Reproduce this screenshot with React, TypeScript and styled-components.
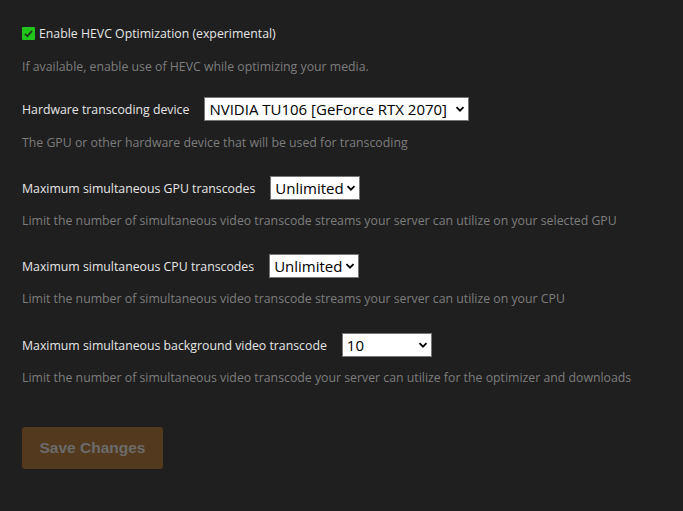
import React from "react";
import styled, { createGlobalStyle } from "styled-components";

const Global = createGlobalStyle`
  html, body { margin: 0; padding: 0; background: #1f1f1f; }
  body { font-family: "Open Sans", "Noto Sans", sans-serif; }
`;

const Page = styled.div`
  min-height: 511px;
  box-sizing: border-box;
  padding: 25px 22px 0 22px;
  background: #1f1f1f;
`;

const CheckRow = styled.label`
  display: flex;
  align-items: center;
  gap: 4px;
  height: 16px;
  color: #e6e6e6;
  font-size: 12.3px;
`;

const CheckBox = styled.span`
  width: 13px;
  height: 13px;
  border-radius: 1px;
  background: #20c41a;
  display: flex;
  align-items: center;
  justify-content: center;
`;

const Hint = styled.div<{ $top?: number }>`
  margin-top: ${(p) => p.$top ?? 12}px;
  color: #7d7d7d;
  font-size: 12.3px;
  line-height: 18px;
  white-space: nowrap;
`;

const Group = styled.div<{ $top?: number }>`
  margin-top: ${(p) => p.$top ?? 24}px;
`;

const Row = styled.div`
  display: flex;
  align-items: center;
  gap: 15px;
  height: 24px;
`;

const Label = styled.span`
  color: #e6e6e6;
  font-size: 12.3px;
  white-space: nowrap;
`;

const SelectBox = styled.div<{ $w: number }>`
  width: ${(p) => p.$w}px;
  height: 24px;
  box-sizing: border-box;
  background: #fff;
  border: 1px solid #767676;
  display: flex;
  align-items: center;
  padding-right: 3px;
`;

const NativeSelect = styled.select`
  appearance: none;
  -webkit-appearance: none;
  border: none;
  background: transparent;
  outline: none;
  flex: 1;
  min-width: 0;
  height: 100%;
  padding: 0 0 0 4px;
  font-family: "Open Sans", "Noto Sans", sans-serif;
  font-size: 15px;
  color: #000;
`;

const Button = styled.button`
  margin-top: 40px;
  width: 141px;
  height: 42px;
  border: none;
  border-radius: 3px;
  background: #533a1e;
  color: #6b6b6b;
  font-family: "Liberation Sans", Arial, sans-serif;
  font-weight: bold;
  font-size: 15.5px;
  padding: 0;
`;

const Chevron = () => (
  <svg width="10" height="10" viewBox="0 0 10 10">
    <path d="M1.5 3.2 L5 6.7 L8.5 3.2" fill="none" stroke="#000" strokeWidth="1.8" />
  </svg>
);

const Select = ({ w, value, options }: { w: number; value: string; options: string[] }) => (
  <SelectBox $w={w}>
    <NativeSelect defaultValue={value}>
      {options.map((o) => (
        <option key={o}>{o}</option>
      ))}
    </NativeSelect>
    <Chevron />
  </SelectBox>
);

const limits = ["Unlimited", "1", "2", "3", "4", "5", "10"];

export default function App() {
  return (
    <Page>
      <Global />
      <CheckRow>
        <CheckBox>
          <svg width="11" height="11" viewBox="0 0 11 11">
            <path d="M2 5.8 L4.4 8.2 L9 2.8" fill="none" stroke="#1d3a1a" strokeWidth="1.8" />
          </svg>
        </CheckBox>
        Enable HEVC Optimization (experimental)
      </CheckRow>
      <Hint $top={17}>If available, enable use of HEVC while optimizing your media.</Hint>

      <Group $top={21}>
        <Row>
          <Label>Hardware transcoding device</Label>
          <Select w={265} value="NVIDIA TU106 [GeForce RTX 2070]" options={["NVIDIA TU106 [GeForce RTX 2070]", "Auto"]} />
        </Row>
        <Hint $top={13}>The GPU or other hardware device that will be used for transcoding</Hint>
      </Group>

      <Group>
        <Row>
          <Label>Maximum simultaneous GPU transcodes</Label>
          <Select w={90} value="Unlimited" options={limits} />
        </Row>
        <Hint>Limit the number of simultaneous video transcode streams your server can utilize on your selected GPU</Hint>
      </Group>

      <Group>
        <Row>
          <Label>Maximum simultaneous CPU transcodes</Label>
          <Select w={90} value="Unlimited" options={limits} />
        </Row>
        <Hint>Limit the number of simultaneous video transcode streams your server can utilize on your CPU</Hint>
      </Group>

      <Group $top={25}>
        <Row>
          <Label>Maximum simultaneous background video transcode</Label>
          <Select w={90} value="10" options={limits} />
        </Row>
        <Hint>Limit the number of simultaneous video transcode your server can utilize for the optimizer and downloads</Hint>
      </Group>

      <Button>Save Changes</Button>
    </Page>
  );
}
